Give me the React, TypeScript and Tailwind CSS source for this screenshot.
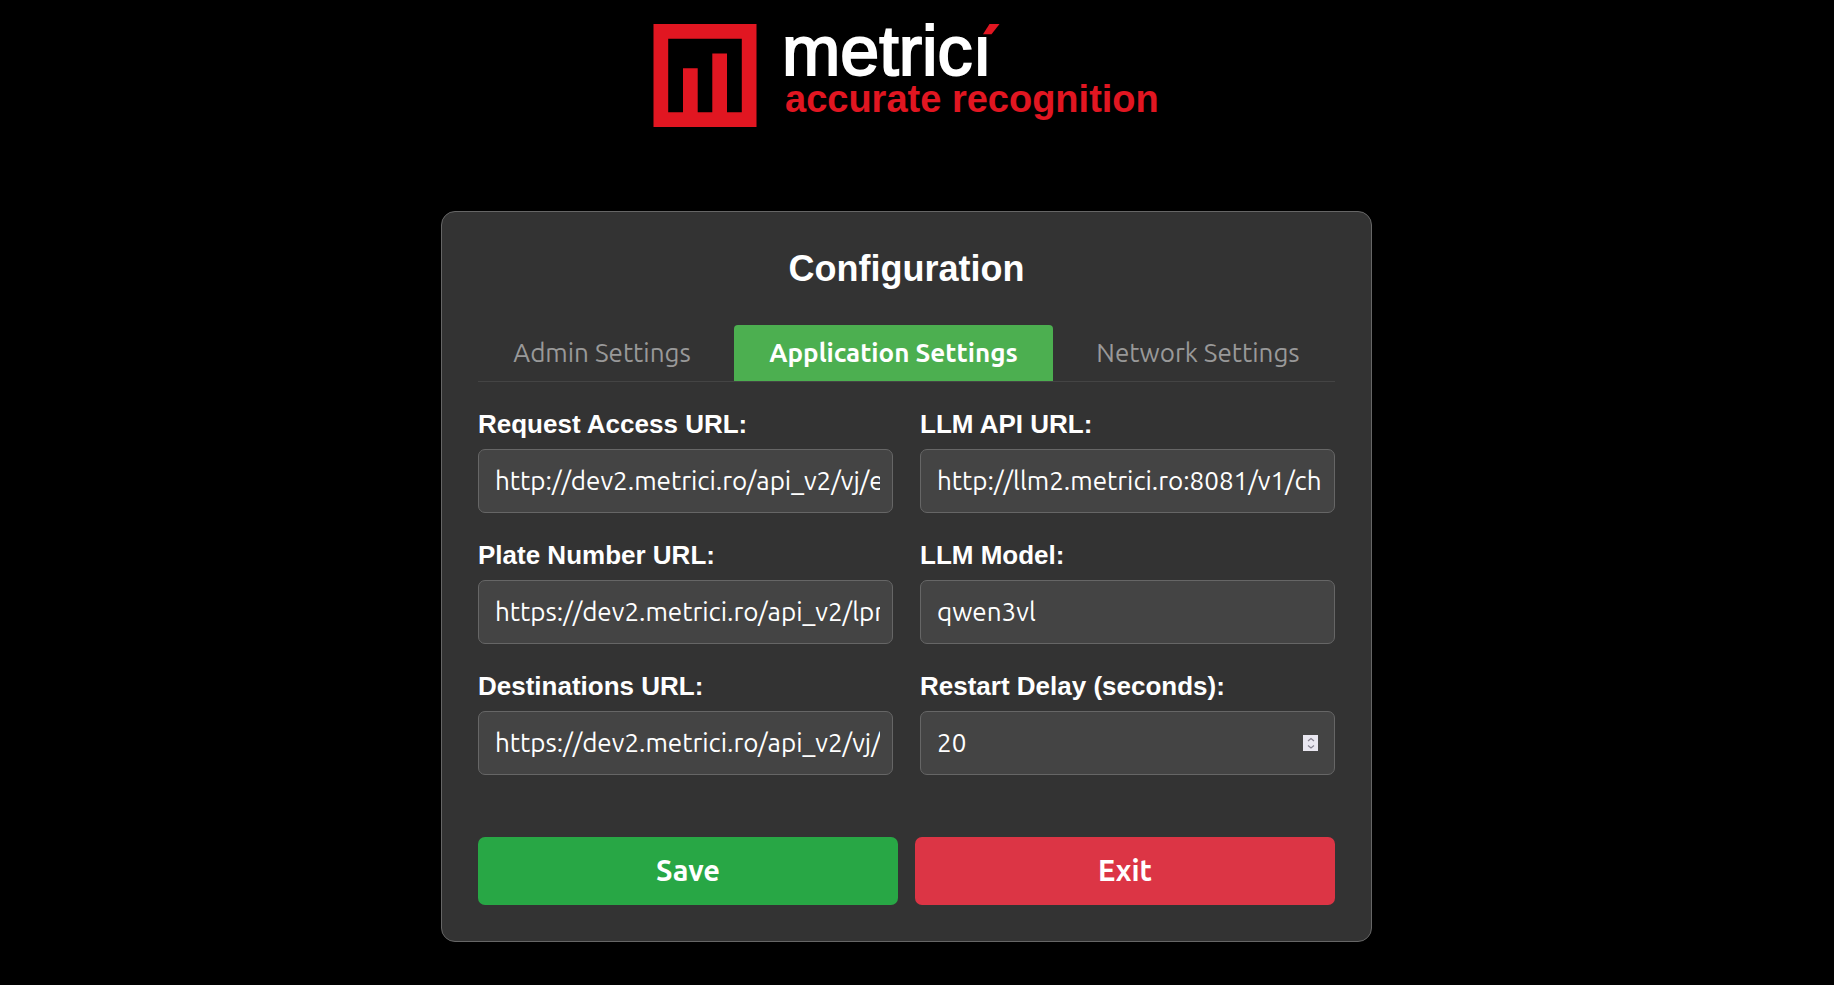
import { useState } from "react";

const tabs = ["Admin Settings", "Application Settings", "Network Settings"];

const fields = [
    {
        id: "request-access-url",
        label: "Request Access URL:",
        value: "http://dev2.metrici.ro/api_v2/vj/event",
    },
    {
        id: "llm-api-url",
        label: "LLM API URL:",
        value: "http://llm2.metrici.ro:8081/v1/chat/completions",
    },
    {
        id: "plate-number-url",
        label: "Plate Number URL:",
        value: "https://dev2.metrici.ro/api_v2/lpr/event",
    },
    { id: "llm-model", label: "LLM Model:", value: "qwen3vl" },
    {
        id: "destinations-url",
        label: "Destinations URL:",
        value: "https://dev2.metrici.ro/api_v2/vj/destinations",
    },
];

const inputClass =
    "w-full h-16 pl-4 pr-3 pb-[2px] rounded-[7px] border border-[#666] bg-[#444] text-white text-[26px] font-normal font-[Ubuntu,'Open_Sans',sans-serif] outline-none";

function Logo() {
    return (
        <svg
            className="w-[508px] max-w-full overflow-visible"
            viewBox="0 0 508 103"
            role="img"
            aria-label="metrici accurate recognition"
        >
            <path
                fill="#e11621"
                fillRule="evenodd"
                d="M0.5 0H103.5V103H0.5ZM15.2 14.7V88.3H30V44.2H44.7V88.3H59.3V29.4H74V88.3H88.8V14.7Z"
            />
            <text
                x="129"
                y="51"
                fill="#fff"
                stroke="#fff"
                strokeWidth="2"
                className="text-[70px] font-['Liberation_Sans',sans-serif]"
            >
                metricı
            </text>
            <path fill="#e11621" d="M336.5 0H346.5L338.5 10.3H330Z" />
            <text
                x="132"
                y="88"
                fill="#e11621"
                className="text-[38px] font-bold font-['Liberation_Sans',sans-serif]"
            >
                accurate recognition
            </text>
        </svg>
    );
}

function Stepper({ onStep }: { onStep: (by: number) => void }) {
    return (
        <div className="absolute right-[17px] top-6 w-[15px] h-4 flex flex-col bg-[#e9e7f0]">
            <button
                type="button"
                aria-label="Increase"
                className="h-2 flex justify-center items-center"
                onClick={() => onStep(1)}
            >
                <svg width="15" height="8" fill="none" stroke="#85828f">
                    <path strokeWidth="1.2" d="M5 6L8 3.5L11 6" />
                </svg>
            </button>
            <button
                type="button"
                aria-label="Decrease"
                className="h-2 flex justify-center items-center"
                onClick={() => onStep(-1)}
            >
                <svg width="15" height="8" fill="none" stroke="#85828f">
                    <path strokeWidth="1.2" d="M5 2.5L8 5L11 2.5" />
                </svg>
            </button>
        </div>
    );
}

export default function App() {
    const [active, setActive] = useState("Application Settings");
    const [delay, setDelay] = useState(20);

    return (
        <div className="min-h-screen bg-black pt-6 pb-10 pr-[21px] flex flex-col items-center font-['Liberation_Sans',sans-serif] text-white">
            <Logo />
            <main className="w-full max-w-[931px] mt-[84px] p-9 rounded-[14px] border border-[#666] bg-[#333]">
                <h1 className="text-4xl leading-[42px] font-bold text-center">
                    Configuration
                </h1>
                <div
                    role="tablist"
                    className="mt-[35px] grid grid-cols-[248fr_319fr_274fr] gap-2 border-b border-[#444]"
                >
                    {tabs.map((tab) => (
                        <button
                            key={tab}
                            type="button"
                            role="tab"
                            aria-selected={tab === active}
                            onClick={() => setActive(tab)}
                            className={
                                tab === active
                                    ? "h-14 pb-[2px] rounded-t-[4px] bg-[#4caf50] text-white text-[26px] font-bold whitespace-nowrap font-[Ubuntu,'Open_Sans',sans-serif]"
                                    : "h-14 pb-[2px] rounded-t-[4px] text-[#999] text-[26px] font-normal whitespace-nowrap font-[Ubuntu,'Open_Sans',sans-serif]"
                            }
                        >
                            {tab}
                        </button>
                    ))}
                </div>
                <form onSubmit={(e) => e.preventDefault()}>
                    <div className="mt-[27px] grid grid-cols-2 gap-[27px]">
                        {fields.map((field) => (
                            <div key={field.id}>
                                <label
                                    htmlFor={field.id}
                                    className="block mb-[10px] text-[26px] leading-[30px] font-bold"
                                >
                                    {field.label}
                                </label>
                                <input
                                    id={field.id}
                                    type="text"
                                    defaultValue={field.value}
                                    className={inputClass}
                                />
                            </div>
                        ))}
                        <div>
                            <label
                                htmlFor="restart-delay"
                                className="block mb-[10px] text-[26px] leading-[30px] font-bold"
                            >
                                Restart Delay (seconds):
                            </label>
                            <div className="relative">
                                <input
                                    id="restart-delay"
                                    type="number"
                                    value={delay}
                                    onChange={(e) => setDelay(Number(e.target.value))}
                                    className={inputClass + " [appearance:textfield]"}
                                />
                                <Stepper onStep={(by) => setDelay(delay + by)} />
                            </div>
                        </div>
                    </div>
                    <div className="mt-[62px] grid grid-cols-2 gap-[17px]">
                        <button
                            type="submit"
                            className="h-[68px] rounded-[7px] bg-[#28a745] text-[29px] font-bold font-[Ubuntu,'Open_Sans',sans-serif]"
                        >
                            Save
                        </button>
                        <button
                            type="button"
                            className="h-[68px] rounded-[7px] bg-[#dc3545] text-[29px] font-bold font-[Ubuntu,'Open_Sans',sans-serif]"
                        >
                            Exit
                        </button>
                    </div>
                </form>
            </main>
        </div>
    );
}
